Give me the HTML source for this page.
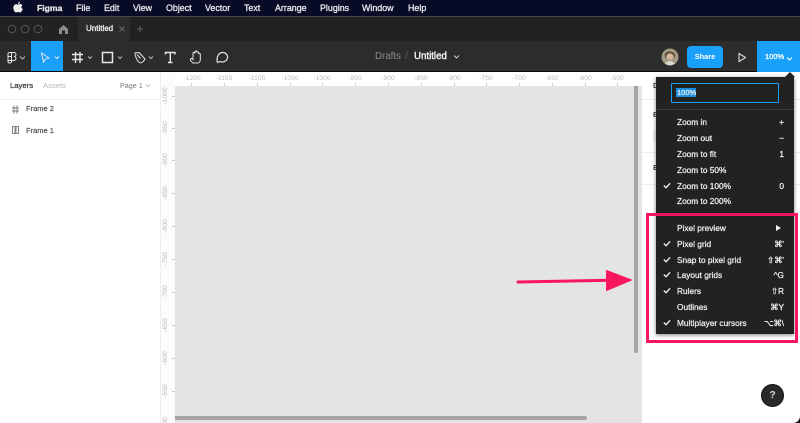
<!DOCTYPE html>
<html><head><meta charset="utf-8"><style>
html,body{margin:0;padding:0;width:800px;height:423px;overflow:hidden;background:#fff}
body{position:relative;font-family:"Liberation Sans",sans-serif;filter:blur(.3px)}
.a,.a *{box-sizing:border-box}
.a{position:absolute}
.t{position:absolute;white-space:nowrap;line-height:12px}
.m{color:#e8e8ea;font-size:8.9px;-webkit-text-stroke:.3px #e8e8ea;top:2px}
.r{color:#bbb;font-size:6.7px;top:73px;transform:translateX(-50%)}
.k{position:absolute;width:1px;height:3px;top:83px;background:#ccc}
.v{color:#bbb;font-size:6.7px;left:166px;transform:translate(-50%,-50%) rotate(-90deg)}
.q{position:absolute;width:3px;height:1px;left:172px;background:#ccc}
.i{color:#eee;font-size:8.3px;left:677px;-webkit-text-stroke:.25px #eee}
.s{color:#eee;font-size:8.3px;right:16px;-webkit-text-stroke:.25px #eee}
.c{position:absolute;left:663px;width:8px;height:7px}
.p{color:#444;-webkit-text-stroke:.15px #444}
</style></head><body>
<div class="a" style="left:0;top:0;width:800px;height:16px;background:#070b26"></div>
<div class="a" style="left:0;top:16px;width:800px;height:1px;background:#45454a"></div>
<div class="a" style="left:0;top:17px;width:800px;height:24px;background:#222"></div>
<div class="a" style="left:78px;top:17px;width:52px;height:24px;background:#2c2c2c"></div>
<div class="a" style="left:0;top:41px;width:800px;height:30px;background:#2c2c2c"></div>
<div class="a" style="left:0;top:71px;width:800px;height:1px;background:#0a0a0a"></div>
<svg class="a" style="left:13px;top:1px" width="10" height="13" viewBox="0 0 10 13"><path fill="#eee" d="M7 0.500C7 2 6 3 5 3C5 2 5.800 .8 7 .5ZM5 3.500C5.800 3.500 6.500 3 7.300 3C8.200 3 9 3.500 9.400 4.200C8 5 8 7.200 9.800 7.900C9.300 9.500 8.200 11.500 7.200 11.500C6.400 11.500 6 11 5.100 11C4.200 11 3.800 11.500 3 11.500C1.800 11.500 .3 9 .3 6.800C.3 4.500 1.800 3.200 3.200 3.200C3.900 3.200 4.500 3.500 5 3.500Z"/></svg>
<div class="t m" style="left:37px;font-size:8.6px;font-weight:bold">Figma</div>
<div class="t m" style="left:76px">File</div>
<div class="t m" style="left:104px">Edit</div>
<div class="t m" style="left:133px">View</div>
<div class="t m" style="left:166px">Object</div>
<div class="t m" style="left:205px">Vector</div>
<div class="t m" style="left:244px">Text</div>
<div class="t m" style="left:275px">Arrange</div>
<div class="t m" style="left:320px">Plugins</div>
<div class="t m" style="left:362px">Window</div>
<div class="t m" style="left:408px">Help</div>

<svg class="a" style="left:0;top:17px" width="150" height="24" viewBox="0 0 150 24">
<g fill="none" stroke="#555" stroke-width="1"><circle cx="12" cy="12" r="3.800"/><circle cx="25" cy="12" r="3.800"/><circle cx="38" cy="12" r="3.800"/></g>
<path fill="#8c8c8c" d="M63.500 8L59 12V17H62V13.500H65V17H68V12Z"/>
<path stroke="#666" stroke-width="1" d="M119.500 9.500L124.500 14.500M124.500 9.500L119.500 14.500"/>
<path stroke="#666" stroke-width="1" d="M140 9V15M137 12H143"/>
</svg>
<div class="t" style="left:86px;top:23px;color:#eee;font-size:8px;-webkit-text-stroke:.3px #eee">Untitled</div>

<div class="a" style="left:31px;top:41px;width:32px;height:30px;background:#18a0fb"></div>
<svg class="a" style="left:0;top:41px" width="240" height="30" viewBox="0 0 240 30" fill="none" stroke="#e6e6e6" stroke-width="1">
<path d="M8 12.500A1.800 1.800 0 0 1 9.800 11.500H14A2 2 0 0 1 14 15.500A2 2 0 0 1 14 19.500H11.500V21A2 2 0 0 1 8 21ZM8 15.500H11.500V19.500H8ZM11.500 11.500V15.500"/>
<path d="M20 15.500L22.500 18L25 15.500" stroke="#bbb"/>
<path d="M41.500 12L49 17L45.800 17.800L43.500 21Z"/>
<path d="M55 15.500L57 17.500L59 15.500"/>
<path d="M75.500 11V22M80 11V22M72 13.500H83M72 18.500H83" stroke-width="1.400"/>
<path d="M88 15.500L90 17.500L92 15.500" stroke="#bbb"/>
<rect x="102.500" y="11.500" width="10" height="10" stroke-width="1.500"/>
<path d="M118 15.500L120 17.500L122 15.500" stroke="#bbb"/>
<path d="M135 12L139 11.500L145 18C143.500 21 141 22.500 139.500 21.500C137 20 135 15 135 12ZM137 13.500L140.500 17.500"/>
<path d="M149 15.500L151 17.500L153 15.500" stroke="#bbb"/>
<path d="M165.500 13.500V11.500H175V13.500M170.300 11.500V21.500M168 21.500H172.500" stroke-width="1.400"/>
<path d="M193 22C191 20.500 189.500 18.500 191 17.500C192 17 192.500 18 193 18.500V12.500C193 11 194.800 11 195 12.500V11C195 9.500 196.800 9.500 196.800 11V11.500C196.800 10.300 198.600 10.500 198.600 12V13C198.600 12 200.300 12 200.300 13.500V18.500C200.300 20.500 199.300 22 197.800 22Z"/>
<path d="M217.500 21.500C216 17 218.500 11.500 222.500 11.500C226 11.500 228 14.500 227.500 17C226.500 20.500 222.500 21.800 220 20.500Z" stroke-width="1.200"/>
</svg>

<div class="t" style="left:375px;top:51px;color:#8a8a8a;font-size:9.7px">Drafts</div>
<div class="t" style="left:405px;top:51px;color:#666;font-size:10px">/</div>
<div class="t" style="left:414px;top:51px;color:#f2f2f2;font-size:9.7px;-webkit-text-stroke:.4px #f2f2f2">Untitled</div>
<svg class="a" style="left:453px;top:54px" width="8" height="6"><path d="M1 1.500L3.500 4L6 1.500" fill="none" stroke="#ccc"/></svg>

<svg class="a" style="left:661px;top:48px" width="18" height="18" viewBox="0 0 17 17"><circle cx="8.500" cy="8.500" r="8" fill="#a29a85"/><path d="M3.500 7C4 2 12 2 13.500 7L13 10L11.500 6.500H5.500L4 10Z" fill="#5e4b3a"/><circle cx="8.500" cy="8" r="3" fill="#d9b79c"/><path d="M4 15C5.500 11.500 11.500 11.500 13 15L8.500 16.500Z" fill="#d8d8cc"/></svg>
<div class="a" style="left:687px;top:46px;width:36px;height:22px;border-radius:4px;background:#18a0fb;color:#fff;font-size:7.4px;font-weight:bold;text-align:center;line-height:22px">Share</div>
<svg class="a" style="left:738px;top:52px" width="10" height="11"><path d="M1 1.500L7.500 5.500L1 9.500Z" fill="none" stroke="#ddd" stroke-width="1.100"/></svg>
<div class="a" style="left:757px;top:41px;width:43px;height:31px;background:#18a0fb"></div>
<div class="t" style="left:765px;top:51px;color:#fff;font-size:7.5px;-webkit-text-stroke:.3px #fff">100%</div>
<svg class="a" style="left:786px;top:56px" width="8" height="6"><path d="M1 1.500L3.500 4L6 1.500" fill="none" stroke="#fff"/></svg>

<!-- left panel -->
<div class="a" style="left:0;top:72px;width:161px;height:351px;background:#fff;border-right:1px solid #eee"></div>
<div class="a" style="left:0;top:99px;width:160px;height:1px;background:#eee"></div>
<div class="t p" style="left:10px;top:80px;font-size:7.7px;-webkit-text-stroke:.3px #444">Layers</div>
<div class="t" style="left:43px;top:80px;color:#b8b8b8;font-size:7.7px">Assets</div>
<div class="t" style="left:120px;top:80px;color:#777;font-size:7.2px">Page 1</div>
<svg class="a" style="left:145px;top:83px" width="7" height="6"><path d="M1 1.500L3.200 3.700L5.400 1.500" fill="none" stroke="#bbb"/></svg>
<svg class="a" style="left:10px;top:104px" width="12" height="32" fill="none" stroke="#777" stroke-width=".9"><path d="M4 1.500V9.500M7 1.500V9.500M2 4H9M2 7H9"/><rect x="2.500" y="22.500" width="2.500" height="7"/><rect x="6" y="22.500" width="2.500" height="7"/></svg>
<div class="t p" style="left:26px;top:103px;font-size:7.5px">Frame 2</div>
<div class="t p" style="left:26px;top:125px;font-size:7.5px">Frame 1</div>

<!-- rulers -->
<div class="a" style="left:161px;top:72px;width:481px;height:14px;background:#fff"></div>
<div class="a" style="left:161px;top:72px;width:14px;height:351px;background:#fcfcfc"></div>
<div class="t r" style="left:192px">-1200</div><div class="k" style="left:191px"></div>
<div class="t r" style="left:224px">-1150</div><div class="k" style="left:224px"></div>
<div class="t r" style="left:257px">-1100</div><div class="k" style="left:257px"></div>
<div class="t r" style="left:290px">-1050</div><div class="k" style="left:290px"></div>
<div class="t r" style="left:322px">-1000</div><div class="k" style="left:322px"></div>
<div class="t r" style="left:355px">-950</div><div class="k" style="left:355px"></div>
<div class="t r" style="left:388px">-900</div><div class="k" style="left:388px"></div>
<div class="t r" style="left:421px">-850</div><div class="k" style="left:421px"></div>
<div class="t r" style="left:454px">-800</div><div class="k" style="left:454px"></div>
<div class="t r" style="left:486px">-750</div><div class="k" style="left:486px"></div>
<div class="t r" style="left:519px">-700</div><div class="k" style="left:519px"></div>
<div class="t r" style="left:552px">-650</div><div class="k" style="left:552px"></div>
<div class="t r" style="left:585px">-600</div><div class="k" style="left:585px"></div>
<div class="t r" style="left:617px">-550</div><div class="k" style="left:617px"></div>
<div class="t v" style="top:96px">-1000</div><div class="q" style="top:96px"></div>
<div class="t v" style="top:128px">-950</div><div class="q" style="top:128px"></div>
<div class="t v" style="top:160px">-900</div><div class="q" style="top:160px"></div>
<div class="t v" style="top:193px">-850</div><div class="q" style="top:193px"></div>
<div class="t v" style="top:226px">-800</div><div class="q" style="top:226px"></div>
<div class="t v" style="top:259px">-750</div><div class="q" style="top:259px"></div>
<div class="t v" style="top:292px">-700</div><div class="q" style="top:292px"></div>
<div class="t v" style="top:325px">-650</div><div class="q" style="top:325px"></div>
<div class="t v" style="top:358px">-600</div><div class="q" style="top:358px"></div>
<div class="t v" style="top:391px">-550</div><div class="q" style="top:391px"></div>
<div class="t v" style="top:424px">-500</div>

<!-- canvas -->
<div class="a" style="left:175px;top:86px;width:467px;height:337px;background:#e4e4e4"></div>
<div class="a" style="left:634px;top:86px;width:4px;height:267px;background:#a5a5a5;border-radius:0 0 2px 2px"></div>
<div class="a" style="left:175px;top:416px;width:412px;height:4px;background:#a5a5a5;border-radius:0 2px 2px 0"></div>

<!-- right panel -->
<div class="a" style="left:642px;top:72px;width:158px;height:351px;background:#fff"></div>
<div class="a" style="left:642px;top:99px;width:158px;height:1px;background:#eee"></div>
<div class="a" style="left:642px;top:152px;width:158px;height:1px;background:#eee"></div>
<div class="a" style="left:642px;top:184px;width:158px;height:1px;background:#eee"></div>
<div class="t" style="left:653px;top:80px;color:#444;font-size:7.5px;font-weight:bold">D</div>
<div class="t" style="left:653px;top:109px;color:#444;font-size:7.5px;font-weight:bold">E</div>
<div class="a" style="left:653px;top:131px;width:3px;height:10px;background:#eee"></div>
<div class="t" style="left:653px;top:162px;color:#444;font-size:7.5px;font-weight:bold">E</div>
<svg class="a" style="left:793px;top:416px" width="7" height="7"><path d="M7 0V7H0C4 7 7 4 7 0Z" fill="#111"/></svg>
<div class="a" style="left:761px;top:384px;width:23px;height:23px;border-radius:50%;background:#2a2a2a;border:1px solid #111;color:#ddd;font-size:10px;font-weight:bold;text-align:center;line-height:21px">?</div>

<!-- menu -->
<svg class="a" style="left:783px;top:72px;z-index:3" width="14" height="6"><path d="M7 0L12 5H2Z" fill="#1f1f1f"/></svg>
<div class="a" style="left:656px;top:77px;width:138px;height:257px;background:#222;box-shadow:0 1px 4px rgba(0,0,0,.5);z-index:2"></div>
<div style="position:absolute;inset:0;z-index:3">
<div class="a" style="left:671px;top:83px;width:108px;height:20px;border:1px solid #18a0fb;border-radius:1px"></div>
<div class="t" style="left:676px;top:88px;width:20px;padding-left:1px;box-sizing:border-box;background:#1a8fe0;color:#eee;font-size:7.5px;-webkit-text-stroke:.25px #eee;line-height:9px">100%</div>
<div class="a" style="left:656px;top:109px;width:138px;height:1px;background:#3c3c3c"></div>
<div class="t i" style="top:116px">Zoom in</div><div class="t s" style="top:116px">+</div>
<div class="t i" style="top:132px">Zoom out</div><div class="t s" style="top:132px">−</div>
<div class="t i" style="top:148px">Zoom to fit</div><div class="t s" style="top:148px">1</div>
<div class="t i" style="top:164px">Zoom to 50%</div>
<div class="t i" style="top:180px">Zoom to 100%</div><div class="t s" style="top:180px">0</div>
<div class="t i" style="top:195px">Zoom to 200%</div>
<div class="t i" style="top:222px">Pixel preview</div>
<svg class="a" style="left:775px;top:224px" width="7" height="8"><path d="M1 1L6 4L1 7Z" fill="#eee"/></svg>
<div class="t i" style="top:238px">Pixel grid</div><div class="t s" style="top:238px">⌘'</div>
<div class="t i" style="top:254px">Snap to pixel grid</div><div class="t s" style="top:254px">⇧⌘'</div>
<div class="t i" style="top:269px">Layout grids</div><div class="t s" style="top:269px">^G</div>
<div class="t i" style="top:285px">Rulers</div><div class="t s" style="top:285px">⇧R</div>
<div class="t i" style="top:301px">Outlines</div><div class="t s" style="top:301px">⌘Y</div>
<div class="t i" style="top:317px">Multiplayer cursors</div><div class="t s" style="top:317px">⌥⌘\</div>
<svg class="c" style="top:182px" viewBox="0 0 9 7"><path d="M1 3.500L3.400 6L8 1" fill="none" stroke="#eee" stroke-width="1.500"/></svg>
<svg class="c" style="top:240px" viewBox="0 0 9 7"><path d="M1 3.500L3.400 6L8 1" fill="none" stroke="#eee" stroke-width="1.500"/></svg>
<svg class="c" style="top:256px" viewBox="0 0 9 7"><path d="M1 3.500L3.400 6L8 1" fill="none" stroke="#eee" stroke-width="1.500"/></svg>
<svg class="c" style="top:271px" viewBox="0 0 9 7"><path d="M1 3.500L3.400 6L8 1" fill="none" stroke="#eee" stroke-width="1.500"/></svg>
<svg class="c" style="top:287px" viewBox="0 0 9 7"><path d="M1 3.500L3.400 6L8 1" fill="none" stroke="#eee" stroke-width="1.500"/></svg>
<svg class="c" style="top:319px" viewBox="0 0 9 7"><path d="M1 3.500L3.400 6L8 1" fill="none" stroke="#eee" stroke-width="1.500"/></svg>
</div>

<!-- annotations -->
<div class="a" style="left:646px;top:213px;width:152px;height:130px;border:3px solid #f8175f;z-index:4"></div>
<svg class="a" style="left:510px;top:265px;z-index:4" width="130" height="35"><path d="M8 17L100 15.200" stroke="#f8175f" stroke-width="3" stroke-linecap="round"/><path d="M96.500 5.500L121.500 15L96.500 25.500Z" fill="#f8175f" stroke="#f8175f" stroke-linejoin="round"/></svg>
</body></html>
